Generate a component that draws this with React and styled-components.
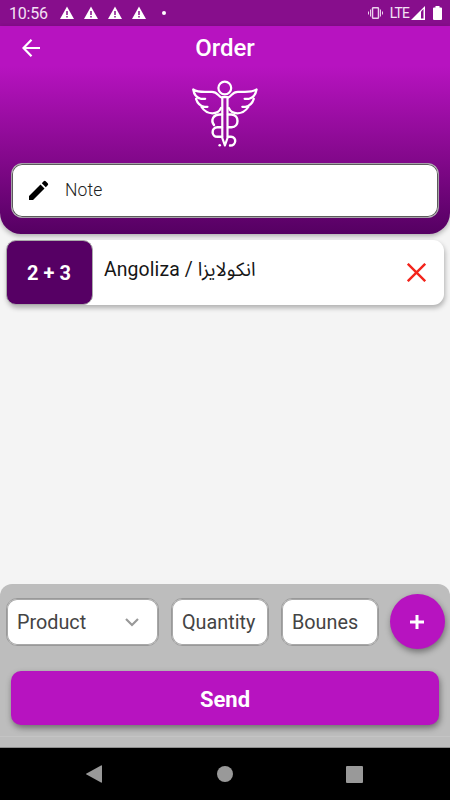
import React, { useState } from "react";
import styled, { createGlobalStyle } from "styled-components";

const GlobalStyle = createGlobalStyle`
  * {
    box-sizing: border-box;
  }
  body {
    margin: 0;
    font-family: Roboto, "Noto Sans", sans-serif;
  }
  input::placeholder {
    color: #444;
    opacity: 1;
  }
`;

const Screen = styled.div`
  display: flex;
  flex-direction: column;
  width: 450px;
  height: 800px;
  overflow: hidden;
  background: #f4f4f4;
`;

const StatusBar = styled.div`
  display: flex;
  flex: none;
  align-items: center;
  justify-content: space-between;
  height: 26px;
  padding: 0 8px 0 9px;
  color: #f3e2f4;
  background: #870e8c;
`;

const StatusGroup = styled.div`
  display: flex;
  align-items: center;
  height: 26px;
`;

const Clock = styled.span`
  width: 51px;
  padding-top: 2px;
  font-size: 16px;
  line-height: 26px;
  letter-spacing: -0.2px;
`;

const Warning = styled.svg`
  width: 14px;
  height: 14px;
  margin-right: 10px;
`;

const Dot = styled.span`
  width: 4px;
  height: 4px;
  margin-left: 6px;
  border-radius: 50%;
  background: #fff;
`;

const Network = styled.span`
  margin-left: 7px;
  margin-right: 2px;
  font-size: 13.8px;
  line-height: 27px;
  letter-spacing: -0.8px;
`;

const Header = styled.header`
  flex: none;
  height: 208px;
  padding: 0 11px;
  border-radius: 0 0 21px 21px;
  background: linear-gradient(
    #b713c0 0,
    #b713c0 40px,
    #87098f 126px,
    #550062 208px
  );
  box-shadow: 0 2px 5px rgba(0, 0, 0, 0.3);
`;

const TitleBar = styled.div`
  display: grid;
  grid-template-columns: 40px 1fr 40px;
  align-items: center;
  height: 44px;
`;

const BackButton = styled.button`
  display: flex;
  width: 39px;
  height: 40px;
  padding: 0;
  align-items: center;
  justify-content: center;
  border: 0;
  background: none;
`;

const Title = styled.h1`
  margin: 0;
  font-size: 24px;
  font-weight: 500;
  line-height: 44px;
  text-align: center;
  color: #fff;
`;

const Logo = styled.svg`
  display: block;
  width: 68px;
  height: 68px;
  margin: 10px auto 15px;
`;

const NoteBox = styled.label`
  display: flex;
  align-items: center;
  height: 55px;
  padding: 0 0 1px 15px;
  border: 1px solid #a6a0a8;
  border-radius: 11px;
  background: #fff;
  box-shadow: inset 0 0 0 1px #5c5c5c;
`;

const NoteInput = styled.input`
  width: 340px;
  margin-left: 14px;
  padding: 0;
  border: 0;
  outline: 0;
  font: 300 17.5px Roboto, sans-serif;
  letter-spacing: 0.1px;
  &::placeholder {
    color: #222;
  }
`;

const List = styled.main`
  flex: 1;
  padding: 6px 6px 0 6px;
`;

const Item = styled.article`
  display: flex;
  align-items: center;
  height: 65px;
  border-radius: 11px;
  background: #fff;
  box-shadow: 1px 3px 5px rgba(0, 0, 0, 0.28);
`;

const Amount = styled.div`
  flex: none;
  width: 87px;
  height: 65px;
  padding-right: 1px;
  border: 1px solid #aaa;
  border-radius: 10px;
  font-size: 20px;
  font-weight: 700;
  line-height: 64px;
  text-align: center;
  color: #fff;
  background: #560064;
`;

const ItemName = styled.div`
  flex: 1;
  margin-left: 11px;
  padding-bottom: 5px;
  font-size: 19.4px;
  line-height: 28px;
  letter-spacing: 0.12px;
  color: #161616;
`;

const Arabic = styled.span`
  font-family: "Noto Sans Arabic", "DejaVu Sans", sans-serif;
  font-size: ${(props) => props.$size}px;
  letter-spacing: 0;
`;

const RemoveButton = styled.button`
  display: flex;
  margin-right: 18px;
  padding: 0;
  border: 0;
  background: none;
`;

const Footer = styled.footer`
  flex: none;
  height: 164.5px;
  padding: 11px 6px 0;
  border-bottom: 1px solid #8c8c8c;
  border-radius: 12px 12px 0 0;
  background: linear-gradient(#bdbdbd 152px, #c4c4c4 152px, #c4c4c4 153px, #bdbdbd 153px);
`;

const Fields = styled.div`
  display: flex;
  align-items: center;
  height: 54px;
`;

const Field = styled.label`
  display: flex;
  flex: none;
  align-items: center;
  justify-content: space-between;
  width: ${(props) => props.$width}px;
  height: 48px;
  margin-right: 12px;
  padding: 1px 10px 0;
  border: 1px solid #999;
  border-radius: 11px;
  background: #fff;
  box-shadow: inset 0 0 0 1px #a8a8a8;
`;

const FieldInput = styled.input`
  width: 100%;
  min-width: 0;
  padding: 1px 0 0;
  border: 0;
  outline: 0;
  background: none;
  font: 19.8px Roboto, sans-serif;
`;

const AddButton = styled.button`
  display: flex;
  flex: none;
  width: 55px;
  height: 55px;
  margin-left: -1.5px;
  align-items: center;
  justify-content: center;
  padding: 0;
  border: 0;
  border-radius: 50%;
  background: #b713c0;
  box-shadow: 1px 3px 6px rgba(0, 0, 0, 0.4);
`;

const SendButton = styled.button`
  display: block;
  width: 428px;
  height: 54px;
  margin: 22.5px 5px 0;
  padding: 2px 0 0;
  border: 0;
  border-radius: 10px;
  font: 700 22px Roboto, sans-serif;
  color: #fff;
  background: #b713c0;
  box-shadow: 1px 3px 6px rgba(0, 0, 0, 0.42);
`;

const NavBar = styled.nav`
  display: flex;
  flex: none;
  height: 52px;
  align-items: center;
  justify-content: space-between;
  padding: 0 87px 0 86px;
  background: #000;
`;

const HomeIcon = styled.svg`
  margin-left: 2px;
`;

const BatteryIcon = styled.svg`
  margin-left: 8px;
`;

const Chevron = styled.svg`
  flex: none;
  margin-right: 9px;
`;

const WarningIcon = () => (
  <Warning viewBox="0 0 14 14">
    <path d="M7 .5 14 13H0z" fill="#fff" />
    <path d="M7 5v4M7 10v1.5" stroke="#870e8c" strokeWidth="1.5" />
  </Warning>
);

const Caduceus = () => (
  <Logo
    viewBox="0 0 68 68"
    fill="none"
    stroke="#fff"
    strokeWidth="2.2"
    strokeLinecap="round"
    strokeLinejoin="round"
  >
    <circle cx="33.8" cy="8" r="6.400" />
    {/* wings */}
    <path d="M30.500 17.500C27 16 26.500 11.900 21 11.900H14C9 11.900 5 11.300 2.200 9.500c.8 5 2.500 8 7.500 9.300h4.500M5 18.800c1.500 4.700 4 7.200 8.500 8h3M10.500 27c3 4.500 7 6.300 11 6.300 4 0 7-2 8.500-5.300" />
    <path d="M37.300 17.500c3.500-1.500 4-5.600 9.500-5.600h7c5 0 9-.6 11.800-2.400-.8 5-2.500 8-7.500 9.300h-4.500M62.800 18.800c-1.500 4.700-4 7.200-8.500 8h-3M57.300 27c-3 4.500-7 6.300-11 6.300-4 0-7-2-8.500-5.300" />
    {/* staff */}
    <path d="M31.300 17.200h5.200V58l-2.600 7.500L31.300 58z" />
    {/* snake */}
    <path d="M31 34.500h-2c-7 .2-9.500 5.500-6 10.500M37 34.500h3.500c8 .2 8 12.800 0 12.800H37M31 47.300h-4.500c-6.500.2-6.500 9.500 0 9.500H31M37 56.800h3c6 0 5.500 9-1 8.700" strokeWidth="2.400" />
    <path d="M28.700 65.300h.01" strokeWidth="2.600" />
  </Logo>
);

const App = () => {
  const [note, setNote] = useState("");
  const [items, setItems] = useState([
    { id: 1, quantity: 2, bonus: 3, name: "Angoliza", arabic: "انكولايزا" },
  ]);
  const [draft, setDraft] = useState({ product: "", quantity: "", bonus: "" });
  const update = (key) => (e) => setDraft({ ...draft, [key]: e.target.value });
  const removeItem = (id) => setItems((old) => old.filter((i) => i.id !== id));
  const addItem = () => {
    if (!draft.product) return;
    setItems((old) => [
      ...old,
      {
        id: Date.now(),
        name: draft.product,
        quantity: draft.quantity || 0,
        bonus: draft.bonus || 0,
      },
    ]);
    setDraft({ product: "", quantity: "", bonus: "" });
  };

  return (
    <>
      <GlobalStyle />
      <Screen>
        <StatusBar>
          <StatusGroup>
            <Clock>10:56</Clock>
            {[0, 1, 2, 3].map((n) => (
              <WarningIcon key={n} />
            ))}
            <Dot />
          </StatusGroup>
          <StatusGroup>
            <svg width="15" height="12" viewBox="0 0 15 12" fill="none" stroke="#ead0eb">
              <rect x="4.500" y=".700" width="6" height="10.600" rx="1" strokeWidth="1.500" />
              <path d="M.5 4.500v3M2.500 2.500v7M12.500 2.500v7M14.500 4.500v3" />
            </svg>
            <Network>LTE</Network>
            <svg width="14" height="14" viewBox="0 0 14 14">
              <path d="M14 0v14H0z" fill="#fff" />
              <path d="M10 5.500 12.500 3v9.500H10z" fill="#870e8c" />
            </svg>
            <BatteryIcon width="9" height="14" viewBox="0 0 9 14">
              <path d="M2.500 0h4v1.500H8q1 0 1 1V13q0 1-1 1H1q-1 0-1-1V2.500q0-1 1-1h1.500z" fill="#fff" />
            </BatteryIcon>
          </StatusGroup>
        </StatusBar>

        <Header>
          <TitleBar>
            <BackButton aria-label="Back">
              <svg width="18" height="18" viewBox="0 0 18 18" fill="none" stroke="#fff" strokeWidth="2.2">
                <path d="M9.500.8 1.500 9l8 8.200M1.500 9H18" />
              </svg>
            </BackButton>
            <Title>Order</Title>
          </TitleBar>
          <Caduceus />
          <NoteBox>
            <svg width="24" height="24" viewBox="0 0 24 24">
              <path d="M2 18v4h4L17.500 10.500l-4-4zM20.700 7.300q1-1 0-2l-2-2q-1-1-2 0L14.800 5.200l4 4z" />
            </svg>
            <NoteInput placeholder="Note" value={note} onChange={(e) => setNote(e.target.value)} />
          </NoteBox>
        </Header>

        <List>
          {items.map((item) => (
            <Item key={item.id}>
              <Amount>
                {item.quantity} + {item.bonus}
              </Amount>
              <ItemName>
                {item.name}
                {item.arabic && (
                  <>
                    {" / "}
                    <Arabic $size={19.4} dir="rtl">{item.arabic}</Arabic>
                  </>
                )}
              </ItemName>
              <RemoveButton aria-label="Remove" onClick={() => removeItem(item.id)}>
                <svg width="19" height="19" viewBox="0 0 19 19" stroke="#f3251c" strokeWidth="2.400">
                  <path d="m.8.8 17.400 17.400M18.200.8.8 18.200" />
                </svg>
              </RemoveButton>
            </Item>
          ))}
        </List>

        <Footer>
          <Fields>
            <Field $width={153}>
              <FieldInput placeholder="Product" value={draft.product} onChange={update("product")} />
              <Chevron width="14" height="9" viewBox="0 0 14 9" fill="none" stroke="#999" strokeWidth="2.2">
                <path d="m1 1 6 6 6-6" />
              </Chevron>
            </Field>
            <Field $width={98}>
              <FieldInput placeholder="Quantity" value={draft.quantity} onChange={update("quantity")} />
            </Field>
            <Field $width={98}>
              <FieldInput placeholder="Bounes" value={draft.bonus} onChange={update("bonus")} />
            </Field>
            <AddButton aria-label="Add" onClick={addItem}>
              <svg width="14" height="14" viewBox="0 0 14 14" stroke="#fff" strokeWidth="3">
                <path d="M7 0v14M0 7h14" />
              </svg>
            </AddButton>
          </Fields>
          <SendButton>Send</SendButton>
        </Footer>

        <NavBar>
          <svg width="16" height="18" viewBox="0 0 16 18">
            <path d="M15 .4Q16 0 16 1v16q0 1-1 .6L.5 9.600q-1-.6 0-1.200z" fill="#999" />
          </svg>
          <HomeIcon width="16" height="16" viewBox="0 0 16 16">
            <circle cx="8" cy="8" r="8" fill="#999" />
          </HomeIcon>
          <svg width="17" height="17" viewBox="0 0 17 17">
            <rect width="17" height="17" rx="1" fill="#999" />
          </svg>
        </NavBar>
      </Screen>
    </>
  );
};

export default App;
